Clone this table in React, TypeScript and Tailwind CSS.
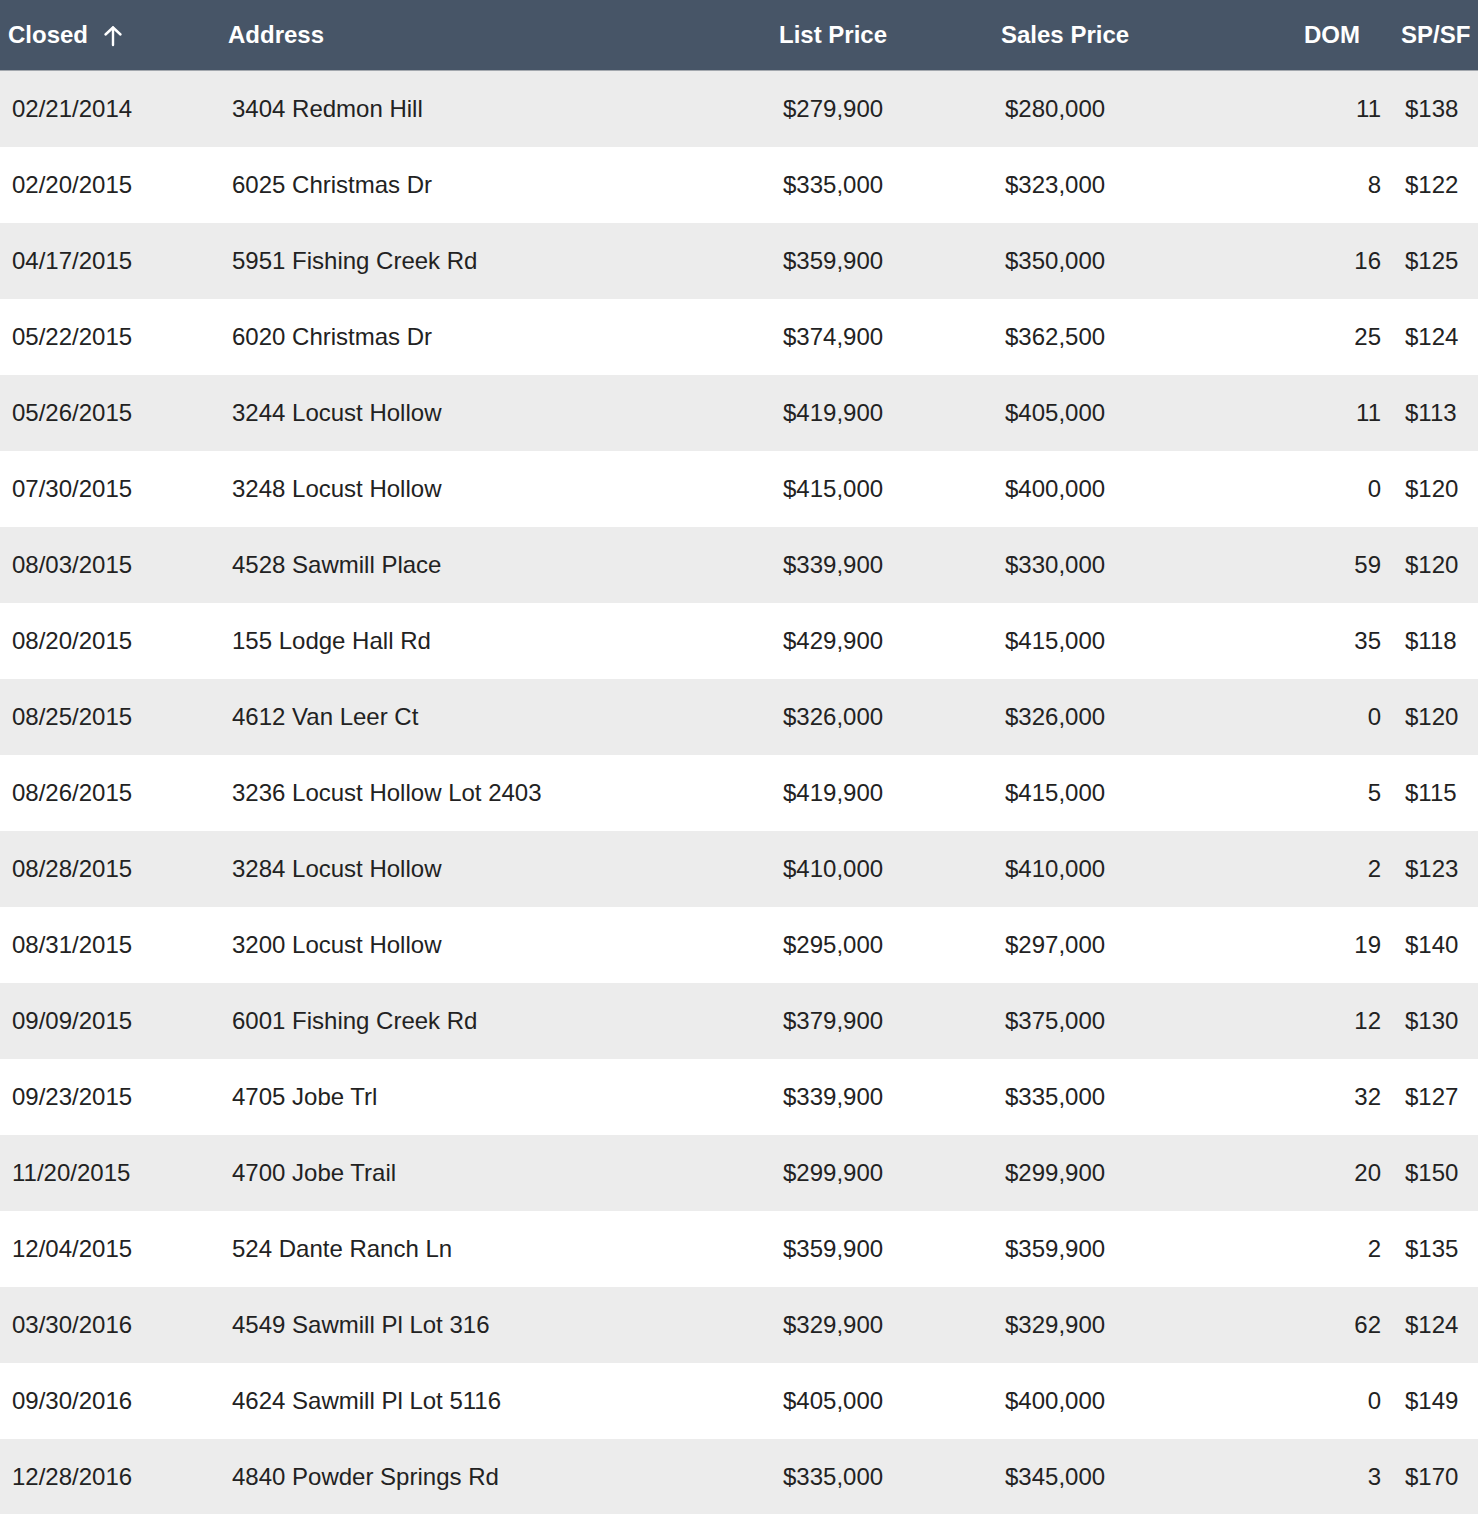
import React from "react";

const rows: [string, string, string, string, string, string][] = [
  ["02/21/2014", "3404 Redmon Hill", "$279,900", "$280,000", "11", "$138"],
  ["02/20/2015", "6025 Christmas Dr", "$335,000", "$323,000", "8", "$122"],
  ["04/17/2015", "5951 Fishing Creek Rd", "$359,900", "$350,000", "16", "$125"],
  ["05/22/2015", "6020 Christmas Dr", "$374,900", "$362,500", "25", "$124"],
  ["05/26/2015", "3244 Locust Hollow", "$419,900", "$405,000", "11", "$113"],
  ["07/30/2015", "3248 Locust Hollow", "$415,000", "$400,000", "0", "$120"],
  ["08/03/2015", "4528 Sawmill Place", "$339,900", "$330,000", "59", "$120"],
  ["08/20/2015", "155 Lodge Hall Rd", "$429,900", "$415,000", "35", "$118"],
  ["08/25/2015", "4612 Van Leer Ct", "$326,000", "$326,000", "0", "$120"],
  ["08/26/2015", "3236 Locust Hollow Lot 2403", "$419,900", "$415,000", "5", "$115"],
  ["08/28/2015", "3284 Locust Hollow", "$410,000", "$410,000", "2", "$123"],
  ["08/31/2015", "3200 Locust Hollow", "$295,000", "$297,000", "19", "$140"],
  ["09/09/2015", "6001 Fishing Creek Rd", "$379,900", "$375,000", "12", "$130"],
  ["09/23/2015", "4705 Jobe Trl", "$339,900", "$335,000", "32", "$127"],
  ["11/20/2015", "4700 Jobe Trail", "$299,900", "$299,900", "20", "$150"],
  ["12/04/2015", "524 Dante Ranch Ln", "$359,900", "$359,900", "2", "$135"],
  ["03/30/2016", "4549 Sawmill Pl Lot 316", "$329,900", "$329,900", "62", "$124"],
  ["09/30/2016", "4624 Sawmill Pl Lot 5116", "$405,000", "$400,000", "0", "$149"],
  ["12/28/2016", "4840 Powder Springs Rd", "$335,000", "$345,000", "3", "$170"],
];

const grid = "grid grid-cols-[220px_551px_222px_250px_150px_85px]";

export default function App() {
  return (
    <div
      className="w-[1478px] bg-white text-[24px] text-[#222]"
      style={{ fontFamily: '"Liberation Sans", Arial, Helvetica, sans-serif' }}
    >
      <div className={`${grid} h-[71px] items-center bg-[#475567] border-b border-[#a3a8ae] font-bold text-white`}>
        <div className="pl-2 flex items-center">
          <span>Closed</span>
          <svg width="20" height="22" viewBox="0 0 20 22" className="ml-[15px] mt-[1px]" fill="none" stroke="white" strokeWidth="2.4" strokeLinecap="round" strokeLinejoin="round">
            <path d="M10 20V2.5" />
            <path d="M2.5 9.5L10 2.5L17.5 9.5" />
          </svg>
        </div>
        <div className="pl-2">Address</div>
        <div className="pl-2">List Price</div>
        <div className="pl-2">Sales Price</div>
        <div className="pr-[33px] text-right">DOM</div>
        <div className="pl-2">SP/SF</div>
      </div>
      {rows.map((r, i) => (
        <div
          key={i}
          className={`${grid} h-[76px] items-center ${i % 2 === 0 ? "bg-[#ececec]" : "bg-white"}`}
        >
          <div className="pl-3">{r[0]}</div>
          <div className="pl-3">{r[1]}</div>
          <div className="pl-3">{r[2]}</div>
          <div className="pl-3">{r[3]}</div>
          <div className="pr-3 text-right">{r[4]}</div>
          <div className="pl-3">{r[5]}</div>
        </div>
      ))}
    </div>
  );
}
